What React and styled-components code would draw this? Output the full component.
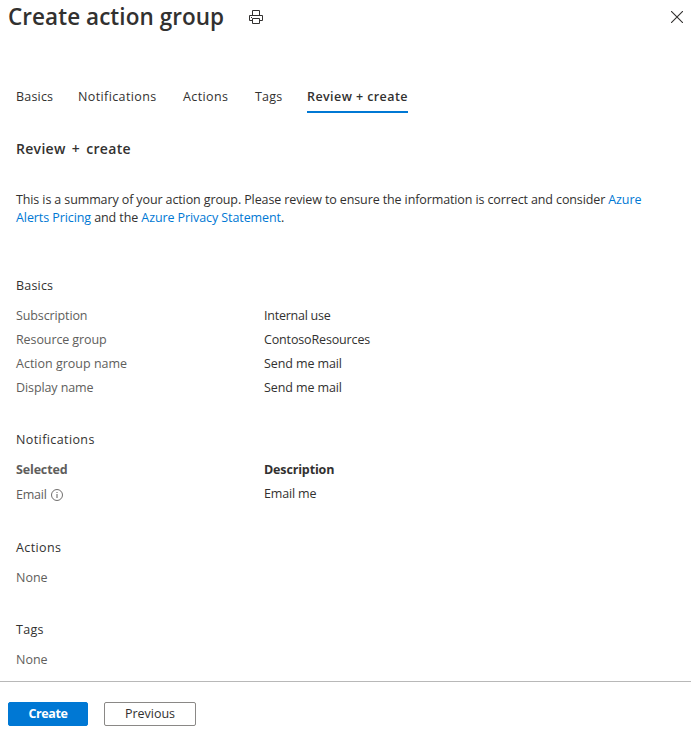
import React from "react";
import styled, { createGlobalStyle } from "styled-components";

const GlobalStyle = createGlobalStyle`
  * { box-sizing: border-box; }
  body { margin: 0; background: #fff; }
`;

const Blade = styled.div`
  display: flex;
  flex-direction: column;
  height: 732px;
  overflow: hidden;
  font-family: "Open Sans", "Noto Sans", sans-serif;
  font-size: 12.5px;
  line-height: 18px;
  color: #323130;
  white-space: nowrap;
`;

const Header = styled.header`
  display: flex;
  align-items: center;
  height: 34px;
  padding: 0 8px;
`;

const Title = styled.h1`
  width: 241px;
  margin: 0;
  font-size: 22.5px;
  line-height: 34px;
  font-weight: 600;
  letter-spacing: 0.05px;
`;

const IconButton = styled.button`
  display: flex;
  padding: 0;
  border: 0;
  background: none;
  color: #323130;
`;

const CloseButton = styled(IconButton)`
  margin-left: auto;
`;

const Tabs = styled.nav`
  display: grid;
  grid-template-columns: 62px 105px 72px 52px 101px;
  margin: 51px 0 0 16px;
`;

const Tab = styled.a`
  height: 28px;
  padding-top: 3px;
  font-weight: ${(p) => (p.$active ? 600 : 400)};
  letter-spacing: ${(p) => p.$track || 0}px;
  border-bottom: 2px solid ${(p) => (p.$active ? "#0078d4" : "transparent")};
`;

const Body = styled.main`
  flex: 1;
  min-height: 0;
  padding: 0 16px;
`;

const PageHeading = styled.h2`
  margin: 26px 0 32px;
  font-size: 14px;
  line-height: 20px;
  font-weight: 600;
  letter-spacing: 0.3px;
  word-spacing: 2.2px;
`;

const Summary = styled.p`
  margin: 0 0 47px;
`;

const Line = styled.span`
  display: block;
  letter-spacing: ${(p) => p.$track}px;
`;

const Link = styled.a`
  color: #0078d4;
`;

const Section = styled.section`
  & + & {
    margin-top: 28px;
  }
`;

const SectionTitle = styled.h3`
  margin: 0;
  height: 30px;
  font-size: inherit;
  line-height: 24px;
  font-weight: 400;
  letter-spacing: ${(p) => p.$track || 0}px;
`;

const Row = styled.div`
  display: grid;
  grid-template-columns: 248px 1fr;
  height: ${(p) => (p.$tall ? 26 : 24)}px;
  line-height: 24px;
  font-weight: ${(p) => (p.$head ? 700 : 400)};
`;

const Label = styled.span`
  display: flex;
  align-items: center;
  gap: 4px;
  color: #605e5c;
  letter-spacing: ${(p) => p.$track || 0}px;
`;

const Value = styled.span`
  letter-spacing: ${(p) => p.$track || 0}px;
`;

const Footer = styled.footer`
  display: flex;
  gap: 16px;
  height: 51px;
  padding: 20px 8px 0;
  border-top: 1px solid #b8b8b8;
`;

const Button = styled.button`
  width: ${(p) => (p.$primary ? 80 : 92)}px;
  height: 24px;
  padding: 0 0 1px;
  border: 1px solid ${(p) => (p.$primary ? "#0078d4" : "#8a8886")};
  border-radius: 2px;
  background: ${(p) => (p.$primary ? "#0078d4" : "#fff")};
  color: ${(p) => (p.$primary ? "#fff" : "#323130")};
  font: inherit;
  font-weight: ${(p) => (p.$primary ? 700 : 500)};
  letter-spacing: ${(p) => (p.$primary ? -0.4 : 0)}px;
`;

const PrintIcon = () => (
  <svg width="14" height="14" viewBox="0 0 14 14" fill="none" stroke="currentColor">
    <path d="M3.5 5V.5h7V5M3 10.5H.5v-5h13v5H11M3.5 8.5h7v5h-7z" />
    <path d="M2 7.5h1" />
  </svg>
);

const CloseIcon = () => (
  <svg width="12" height="12" viewBox="0 0 12 12" stroke="currentColor" strokeWidth="1.1">
    <path d="M0 0l12 12M12 0L0 12" />
  </svg>
);

const InfoIcon = () => (
  <svg width="12" height="12" viewBox="0 0 12 12" fill="none" stroke="currentColor">
    <circle cx="6" cy="6" r="5.5" strokeWidth=".9" />
    <path d="M6 5v4M6 3v1" />
  </svg>
);

const tabs = [
  { name: "Basics", track: 0.2 },
  { name: "Notifications", track: 0.38 },
  { name: "Actions", track: 0.38 },
  { name: "Tags", track: 0.2 },
  { name: "Review + create", active: true, track: 0.42 },
];

const sections = [
  {
    title: "Basics",
    track: 0.2,
    rows: [
      { label: "Subscription", value: "Internal use", labelTrack: -0.12, valueTrack: -0.24 },
      { label: "Resource group", value: "ContosoResources", labelTrack: -0.1, valueTrack: -0.15 },
      { label: "Action group name", value: "Send me mail", valueTrack: -0.1 },
      { label: "Display name", value: "Send me mail", labelTrack: -0.1, valueTrack: -0.1 },
    ],
  },
  {
    title: "Notifications",
    track: 0.4,
    rows: [
      { label: "Selected", value: "Description", head: true, labelTrack: -0.15, valueTrack: -0.15 },
      { label: "Email", value: "Email me", info: true, labelTrack: -0.2, valueTrack: -0.15 },
    ],
  },
  { title: "Actions", track: 0.4, rows: [{ label: "None" }] },
  { title: "Tags", track: 0.3, rows: [{ label: "None" }] },
];

export default function App() {
  return (
    <Blade>
      <GlobalStyle />
      <Header>
        <Title>Create action group</Title>
        <IconButton aria-label="Print"><PrintIcon /></IconButton>
        <CloseButton aria-label="Close"><CloseIcon /></CloseButton>
      </Header>
      <Tabs>
        {tabs.map((t) => (
          <Tab key={t.name} $active={t.active} $track={t.track}>{t.name}</Tab>
        ))}
      </Tabs>
      <Body>
        <PageHeading>Review + create</PageHeading>
        <Summary>
          <Line $track={-0.115}>
            This is a summary of your action group. Please review to ensure the information is correct and consider <Link>Azure</Link>
          </Line>
          <Line $track={-0.09}>
            <Link>Alerts Pricing</Link> and the <Link>Azure Privacy Statement</Link>.
          </Line>
        </Summary>
        {sections.map((s) => (
          <Section key={s.title}>
            <SectionTitle $track={s.track}>{s.title}</SectionTitle>
            {s.rows.map((r) => (
              <Row key={r.label} $head={r.head} $tall={r.info}>
                <Label $track={r.labelTrack}>{r.label}{r.info && <InfoIcon />}</Label>
                <Value $track={r.valueTrack}>{r.value}</Value>
              </Row>
            ))}
          </Section>
        ))}
      </Body>
      <Footer>
        <Button $primary>Create</Button>
        <Button>Previous</Button>
      </Footer>
    </Blade>
  );
}
